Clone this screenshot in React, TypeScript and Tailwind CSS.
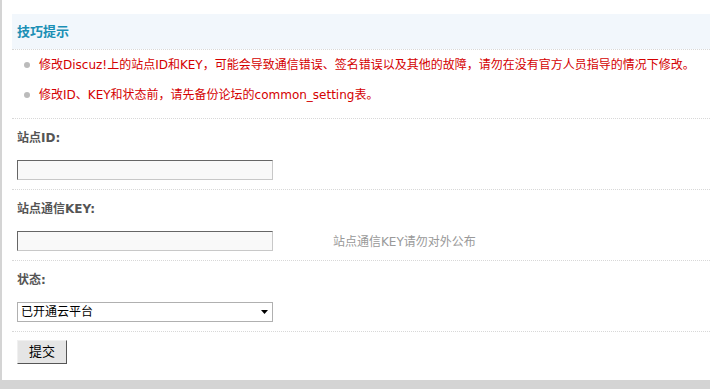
import { useState } from "react";

const font = "font-['Tahoma','DejaVu_Sans','Noto_Sans_CJK_SC',sans-serif]";

function Dotted() {
  return <div className="border-t border-dotted border-[#d8d8d8]" />;
}

export default function App() {
  const [status, setStatus] = useState("open");

  return (
    <div className={`w-[710px] h-[389px] bg-[#d4d4d4] pl-[2px] pb-[9px] text-[12px] leading-[18px] ${font}`}>
      <div className="h-full bg-white pl-[10px] pt-[14px]">
        <div className="h-[35px] bg-[#f2f7fc] flex items-center pl-[5px]">
          <h3 className="font-bold text-[13px] text-[#1a8fb5]">技巧提示</h3>
        </div>
        <Dotted />

        <ul className="pl-[12px] pb-[8px] text-[#d40000]">
          <li className="flex items-center h-[30px] gap-[9px]">
            <span className="w-[6px] h-[6px] rounded-full bg-[#bbbbbb]" />
            <span>修改Discuz!上的站点ID和KEY，可能会导致通信错误、签名错误以及其他的故障，请勿在没有官方人员指导的情况下修改。</span>
          </li>
          <li className="flex items-center h-[30px] gap-[9px]">
            <span className="w-[6px] h-[6px] rounded-full bg-[#bbbbbb]" />
            <span>修改ID、KEY和状态前，请先备份论坛的common_setting表。</span>
          </li>
        </ul>
        <Dotted />

        <Field label="站点ID:">
          <input className="w-[256px] h-[20px] bg-[#f9f9f9] border border-[#c8c8c8] border-t-[#666] border-l-[#666] outline-none" />
        </Field>
        <Dotted />

        <Field label="站点通信KEY:">
          <div className="flex items-center">
            <input className="w-[256px] h-[20px] bg-[#f9f9f9] border border-[#c8c8c8] border-t-[#666] border-l-[#666] outline-none" />
            <span className="ml-[60px] mt-[1px] text-[#999]">站点通信KEY请勿对外公布</span>
          </div>
        </Field>
        <Dotted />

        <Field label="状态:">
          <div className="relative w-[256px] h-[20px] border border-[#b0b0b0] bg-white">
            <select
              value={status}
              onChange={(e) => setStatus(e.target.value)}
              className="appearance-none w-full h-full bg-transparent pl-[3px] text-[12px] text-black outline-none"
            >
              <option value="open">已开通云平台</option>
              <option value="close">关闭云平台</option>
            </select>
            <svg className="absolute right-[4px] top-[7px] pointer-events-none" width="7" height="4" viewBox="0 0 7 4">
              <path d="M0 0h7L3.5 4z" fill="#000" />
            </svg>
          </div>
        </Field>
        <Dotted />

        <div className="pl-[5px] pt-[8px]">
          <button className="w-[50px] h-[24px] bg-[#e5e5e5] border border-[#f0f0f0] border-r-[#555] border-b-[#555] text-black text-[13px]">
            提交
          </button>
        </div>
      </div>
    </div>
  );
}

function Field({ label, children }: { label: string; children: React.ReactNode }) {
  return (
    <div className="pl-[5px] pt-[10px] pb-[9px]">
      <p className="font-bold text-[#555] h-[18px]">{label}</p>
      <div className="mt-[13px]">{children}</div>
    </div>
  );
}
